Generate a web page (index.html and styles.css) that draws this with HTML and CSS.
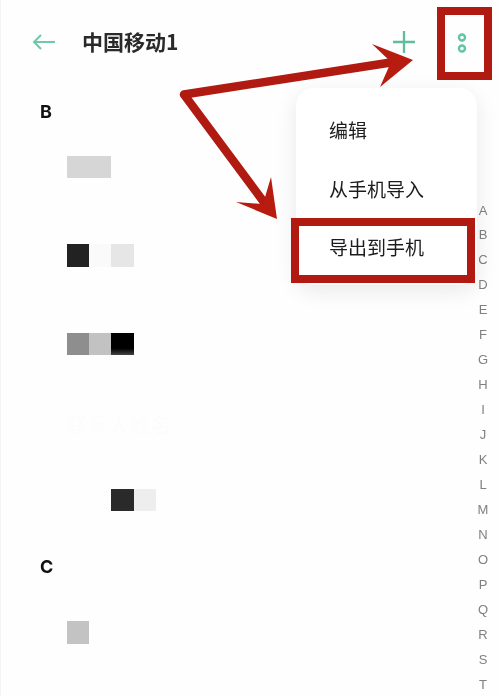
FILE: index.html
```html
<!DOCTYPE html>
<html lang="zh">
<head>
<meta charset="utf-8">
<title>中国移动1</title>
<link rel="stylesheet" href="styles.css">
</head>
<body>
<div class="screen">
  <header class="topbar">
    <svg class="icon-back" width="24" height="20" viewBox="0 0 24 20"><path d="M23 10H2M9 3L2 10l7 7"/></svg>
    <h1 class="title">中国移动1</h1>
    <svg class="icon-plus" width="22" height="22" viewBox="0 0 22 22"><path d="M11 0v22M0 11h22"/></svg>
    <svg class="icon-more" width="10" height="20" viewBox="0 0 10 20"><circle cx="5" cy="4.500" r="3"/><circle cx="5" cy="15.500" r="3"/></svg>
  </header>

  <main class="list">
    <h2 class="letter">B</h2>
    <div class="row row-a"><i class="px wide c1"></i></div>
    <div class="row row-a"><i class="px c2"></i><i class="px c3"></i><i class="px c4"></i></div>
    <div class="row row-a"><i class="px c5"></i><i class="px c6"></i><i class="px c7"></i></div>
    <div class="row row-b"><span class="ghost">联系人姓名</span></div>
    <div class="row row-b"><i class="px c0"></i><i class="px c0"></i><i class="px c8"></i><i class="px c9"></i></div>
    <h2 class="letter letter-c">C</h2>
    <div class="row row-c"><i class="px c10"></i></div>
  </main>

  <nav class="index">
    <span>A</span><span>B</span><span>C</span><span>D</span><span>E</span><span>F</span><span>G</span><span>H</span><span>I</span><span>J</span><span>K</span><span>L</span><span>M</span><span>N</span><span>O</span><span>P</span><span>Q</span><span>R</span><span>S</span><span>T</span>
  </nav>

  <div class="menu">
    <div class="menu-item">编辑</div>
    <div class="menu-item">从手机导入</div>
    <div class="menu-item">导出到手机</div>
  </div>

  <div class="mark mark-more"></div>
  <div class="mark mark-export"></div>
  <svg class="arrows" width="500" height="696" viewBox="0 0 500 696">
    <path class="shaft" d="M394 62L184 94.500L266 205"/>
    <path class="head" d="M413 60L372 44L391 62L380 87Z"/>
    <path class="head" d="M277 219L271 177L263 204L236 202Z"/>
  </svg>
</div>
</body>
</html>
```
FILE: styles.css
```css
* { box-sizing: border-box; }
html, body { margin: 0; padding: 0; }
body {
  width: 500px;
  height: 696px;
  overflow: hidden;
  background: #fff;
  font-family: "Noto Sans CJK SC", "Noto Sans", sans-serif;
}
.screen {
  position: relative;
  width: 500px;
  height: 696px;
  overflow: hidden;
  background: #fefefe;
  border-left: 1px solid #f4f4f4;
  filter: blur(0.4px);
}
.topbar {
  display: flex;
  align-items: center;
  height: 84px;
  padding-left: 31px;
}
.title {
  margin: 0 0 2px 26px;
  font-size: 21px;
  font-weight: 700;
  line-height: 28px;
  color: #2a2a2a;
}
.icon-back path {
  fill: none;
  stroke: #72c7a9;
  stroke-width: 2;
}
.icon-plus path {
  fill: none;
  stroke: #62bd9c;
  stroke-width: 2.300;
}
.icon-plus { margin-left: 215px; }
.icon-more { margin-left: 42px; margin-top: 1px; }
.icon-more circle { fill: none; stroke: #62c4a6; stroke-width: 2.400; }
.list { display: flex; flex-direction: column; }
.letter {
  margin: 16px 0 0 39px;
  height: 22.500px;
  font-family: "Inter", sans-serif;
  font-size: 18px;
  font-weight: 700;
  line-height: 24px;
  color: #111;
}
.letter-c { margin-top: 17.750px; height: 46.500px; }
.row {
  display: flex;
  align-items: center;
  padding-left: 66px;
}
.row-a { height: 88.500px; }
.row-b { height: 74.500px; }
.row-c { height: 62px; }
.px { display: block; width: 22.200px; height: 22.500px; }
.px.wide { width: 44.400px; }
.c0 { background: transparent; }
.c1 { background: #d6d6d6; }
.c2 { background: #222; }
.c3 { background: #fafafa; }
.c4 { background: #e6e6e6; }
.c5 { background: #8e8e8e; }
.c6 { background: #c2c2c2; }
.c7 { background: linear-gradient(#000 70%, #444); }
.c8 { background: #2a2a2a; }
.c9 { background: #eee; }
.c10 { background: #c3c3c3; }
.ghost {
  font-size: 20px;
  line-height: 24px;
  color: #fcfcfc;
  letter-spacing: 1px;
}
.index {
  position: absolute;
  top: 198.500px;
  right: 7px;
  width: 20px;
  display: flex;
  flex-direction: column;
  align-items: center;
  font-family: "Liberation Sans", sans-serif;
  font-size: 13px;
  line-height: 24.950px;
  color: #808080;
}
.menu {
  position: absolute;
  left: 295px;
  top: 88px;
  width: 181px;
  height: 197px;
  padding: 13px 0 0 33px;
  background: #fff;
  border-radius: 18px;
  box-shadow: 0 6px 22px rgba(0, 0, 0, 0.09);
}
.menu-item {
  height: 58.500px;
  font-size: 19px;
  line-height: 58px;
  color: #1c1c1c;
}
.mark {
  position: absolute;
  border: 8px solid #b01a10;
}
.mark-more { left: 436px; top: 7px; width: 55px; height: 73px; }
.mark-export { left: 290px; top: 218px; width: 184px; height: 65px; }
.arrows { position: absolute; left: -1px; top: 0; }
.shaft {
  fill: none;
  stroke: #b01a10;
  stroke-width: 8.500;
  stroke-linejoin: round;
}
.head { fill: #b81b0f; }
```
